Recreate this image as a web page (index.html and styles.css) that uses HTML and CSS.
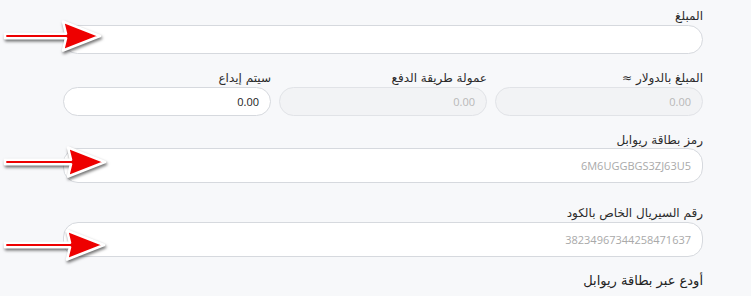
FILE: index.html
```html
<!DOCTYPE html>
<html lang="ar" dir="rtl">
<head>
<meta charset="utf-8">
<title>إيداع</title>
<link rel="stylesheet" href="styles.css">
</head>
<body>
<div class="page">
  <form class="form">
    <div class="group g1">
      <label class="label">المبلغ</label>
      <div class="field f-short"></div>
    </div>
    <div class="row g2">
      <div class="col">
        <label class="label">المبلغ بالدولار ≈</label>
        <div class="field f-short disabled"><span class="val muted">0.00</span></div>
      </div>
      <div class="col">
        <label class="label">عمولة طريقة الدفع</label>
        <div class="field f-short disabled"><span class="val muted">0.00</span></div>
      </div>
      <div class="col">
        <label class="label">سيتم إيداع</label>
        <div class="field f-short"><span class="val">0.00</span></div>
      </div>
    </div>
    <div class="group g3">
      <label class="label">رمز بطاقة ريوابل</label>
      <div class="field f-tall"><span class="val ph">6M6UGGBGS3ZJ63U5</span></div>
    </div>
    <div class="group g4">
      <label class="label">رقم السيريال الخاص بالكود</label>
      <div class="field f-tall"><span class="val ph">38234967344258471637</span></div>
    </div>
    <h3 class="heading">أودع عبر بطاقة ريوابل</h3>
  </form>

  <svg class="arrow a1" viewBox="0 0 110 40" width="110" height="40" aria-hidden="true">
    <polygon points="5,17.8 66,17.8 63,5.5 100,20 63,34.5 66,22.2 5,22.2"/>
  </svg>
  <svg class="arrow a2" viewBox="0 0 110 40" width="110" height="40" aria-hidden="true">
    <polygon points="5,17.8 71,17.8 68,5.5 105,20 68,34.5 71,22.2 5,22.2"/>
  </svg>
  <svg class="arrow a3" viewBox="0 0 110 40" width="110" height="40" aria-hidden="true">
    <polygon points="5,17.8 70,17.8 67,5.5 104,20 67,34.5 70,22.2 5,22.2"/>
  </svg>
</div>
</body>
</html>
```

FILE: styles.css
```css
html, body {
  margin: 0;
  padding: 0;
  background: #f7f8fa;
}

body {
  font-family: "DejaVu Sans", "Noto Sans", sans-serif;
  color: #2b2b2b;
}

.page {
  position: relative;
  width: 751px;
  height: 296px;
  overflow: hidden;
}

.form {
  margin: 0;
  padding: 8px 48px 0 63px;
  display: flex;
  flex-direction: column;
}

.group, .col {
  display: flex;
  flex-direction: column;
}

.row {
  display: grid;
  grid-template-columns: repeat(3, 208px);
  column-gap: 8px;
}

.label {
  font-size: 12px;
  line-height: 16px;
  height: 16px;
  margin-bottom: 1px;
  color: #2b2b2b;
  white-space: nowrap;
}

.g2 { margin-top: 16px; }
.g3 { margin-top: 16px; }
.g3 .label { margin-bottom: 0; }
.g4 { margin-top: 22px; }

.field {
  box-sizing: border-box;
  background: #ffffff;
  border: 1px solid #d6d9de;
  border-radius: 15px;
  display: flex;
  align-items: center;
  padding: 0 11px;
}

.f-short { height: 29px; }
.f-tall { height: 35px; border-radius: 15px; }

.field.disabled {
  background: #f2f3f5;
  border-color: #e1e3e7;
}

.val {
  font-family: "Open Sans", "DejaVu Sans", sans-serif;
  font-size: 11px;
  color: #222;
}

.val.muted { color: #b8b8b8; }
.val.ph { color: #a9a9a9; }

.heading {
  margin: 14px 0 0 0;
  font-size: 13px;
  line-height: 20px;
  font-weight: normal;
  color: #222;
}

.arrow {
  position: absolute;
  left: 0;
  overflow: visible;
  filter: drop-shadow(1px 2px 1.5px rgba(0, 0, 0, 0.55));
}

.arrow polygon {
  fill: #ee0000;
  stroke: #ffffff;
  stroke-width: 2.6;
  stroke-linejoin: round;
}

.a1 { top: 16px; }
.a2 { top: 142px; }
.a3 { top: 225px; }
```
